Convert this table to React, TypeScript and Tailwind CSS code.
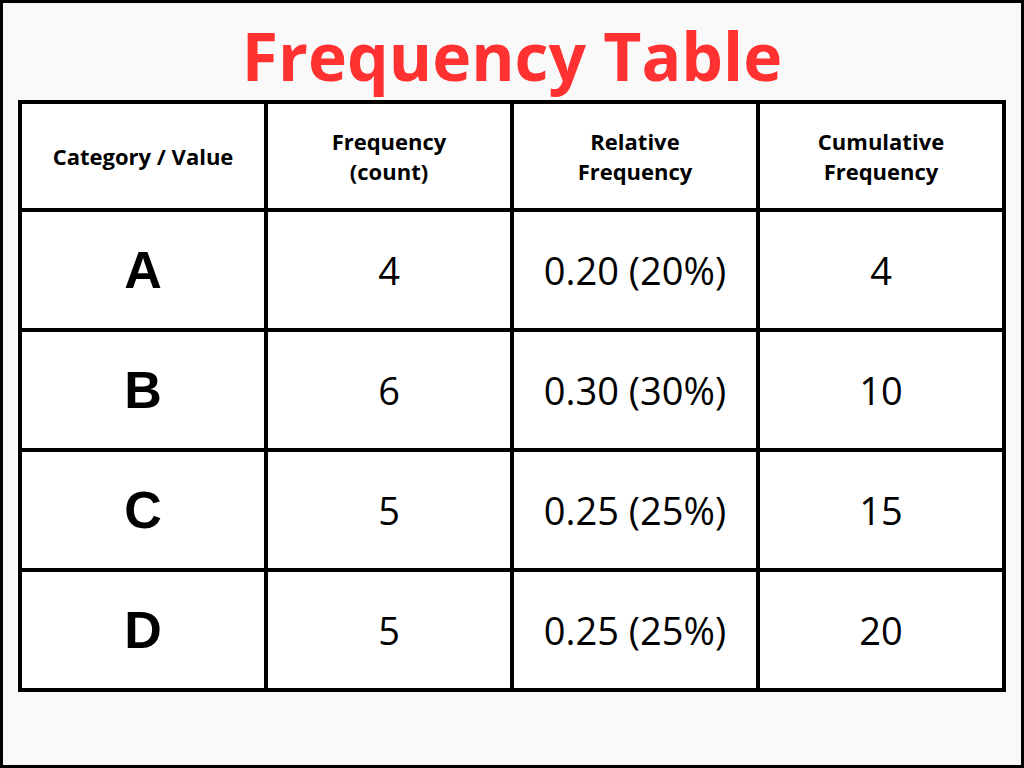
import { Fragment } from "react";

const header = ["Category / Value", "Frequency\n(count)", "Relative\nFrequency", "Cumulative\nFrequency"];

const rows = [
  { cat: "A", count: "4", rel: "0.20 (20%)", cum: "4" },
  { cat: "B", count: "6", rel: "0.30 (30%)", cum: "10" },
  { cat: "C", count: "5", rel: "0.25 (25%)", cum: "15" },
  { cat: "D", count: "5", rel: "0.25 (25%)", cum: "20" },
];

export default function App() {
  return (
    <div className="h-[768px] w-[1024px] border-[3px] border-black bg-[#f9f9f9] px-[15px] font-['Open_Sans',sans-serif]">
      <div className="flex h-[97px] items-center justify-center pt-[6px]">
        <h1 className="text-[66px] font-bold leading-none text-[#ff3131]">Frequency Table</h1>
      </div>

      <div className="grid grid-cols-4 grid-rows-[104px_116px_116px_116px_116px] gap-[4px] bg-black p-[4px]">
        {header.map((h) => (
          <div
            key={h}
            className="flex items-center justify-center whitespace-pre-line bg-white text-center text-[22px] font-bold leading-[30px] text-black"
          >
            {h}
          </div>
        ))}
        {rows.map((r) => (
          <Fragment key={r.cat}>
            <div className="flex items-center justify-center bg-white font-['Liberation_Sans',sans-serif] text-[52px] font-bold text-black">
              {r.cat}
            </div>
            <div className="flex items-center justify-center bg-white text-[38px] text-black">{r.count}</div>
            <div className="flex items-center justify-center bg-white text-[38px] text-black">{r.rel}</div>
            <div className="flex items-center justify-center bg-white text-[38px] text-black">{r.cum}</div>
          </Fragment>
        ))}
      </div>
    </div>
  );
}
